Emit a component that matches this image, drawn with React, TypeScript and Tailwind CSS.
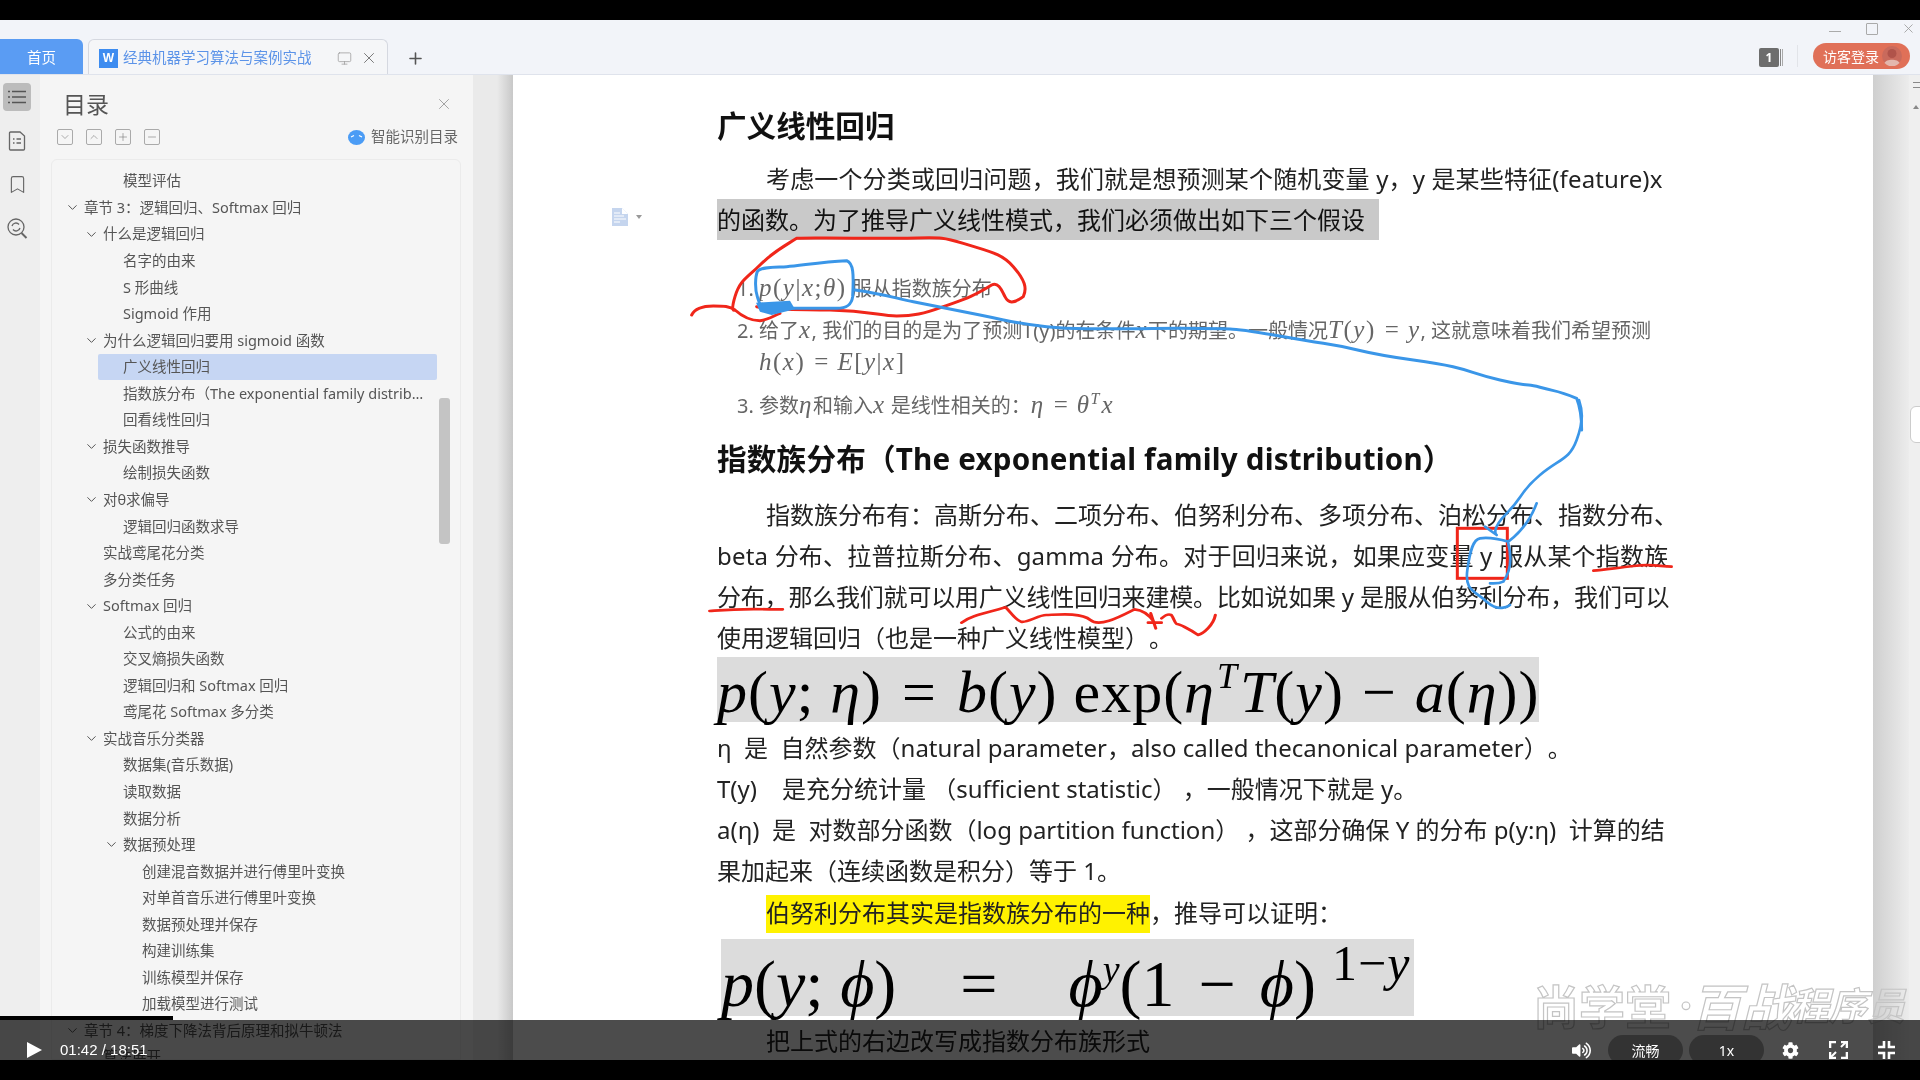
import React from "react";
import { FaVolumeUp, FaCog } from "react-icons/fa";
import { ChevronDown, ChevronUp, Plus, Minus, X, Bookmark, Monitor } from "lucide-react";

type Item = { t: string; x: number; c?: boolean; sel?: boolean };
const toc: Item[] = [
  { t: "模型评估", x: 123 },
  { t: "章节 3：逻辑回归、Softmax 回归", x: 84, c: true },
  { t: "什么是逻辑回归", x: 103, c: true },
  { t: "名字的由来", x: 123 },
  { t: "S 形曲线", x: 123 },
  { t: "Sigmoid 作用", x: 123 },
  { t: "为什么逻辑回归要用 sigmoid 函数", x: 103, c: true },
  { t: "广义线性回归", x: 123, sel: true },
  { t: "指数族分布（The exponential family distrib…", x: 123 },
  { t: "回看线性回归", x: 123 },
  { t: "损失函数推导", x: 103, c: true },
  { t: "绘制损失函数", x: 123 },
  { t: "对θ求偏导", x: 103, c: true },
  { t: "逻辑回归函数求导", x: 123 },
  { t: "实战鸢尾花分类", x: 103 },
  { t: "多分类任务", x: 103 },
  { t: "Softmax 回归", x: 103, c: true },
  { t: "公式的由来", x: 123 },
  { t: "交叉熵损失函数", x: 123 },
  { t: "逻辑回归和 Softmax 回归", x: 123 },
  { t: "鸢尾花 Softmax 多分类", x: 123 },
  { t: "实战音乐分类器", x: 103, c: true },
  { t: "数据集(音乐数据)", x: 123 },
  { t: "读取数据", x: 123 },
  { t: "数据分析", x: 123 },
  { t: "数据预处理", x: 123, c: true },
  { t: "创建混音数据并进行傅里叶变换", x: 142 },
  { t: "对单首音乐进行傅里叶变换", x: 142 },
  { t: "数据预处理并保存", x: 142 },
  { t: "构建训练集", x: 142 },
  { t: "训练模型并保存", x: 142 },
  { t: "加载模型进行测试", x: 142 },
  { t: "章节 4：梯度下降法背后原理和拟牛顿法", x: 84, c: true },
  { t: "算法展开", x: 103 },
];

function M({ children }: { children: React.ReactNode }) {
  return <span className="font-['Liberation_Serif',serif] italic text-[25px] tracking-[1.5px]">{children}</span>;
}
function R({ children }: { children: React.ReactNode }) {
  return <span className="font-['Liberation_Serif',serif] text-[25px] tracking-[1.5px]">{children}</span>;
}
function Eq() {
  return <span className="font-['Liberation_Serif',serif] text-[25px] mx-[9px]">=</span>;
}

function Ann() {
  const red = "#f0261a";
  const blue = "#3a96e8";
  return (
    <svg className="absolute inset-0 pointer-events-none" width="1920" height="1080" viewBox="0 0 1920 1080" fill="none" strokeLinecap="round" strokeLinejoin="round">
      <g transform="translate(680 230) scale(.3333)">
        <path stroke={red} strokeWidth="9" d="M35 255C45 235 70 228 100 228S150 228 165 240C185 258 210 272 240 272C265 270 285 255 300 250M230 230C280 240 330 238 450 240S600 258 650 258S730 252 790 230S870 205 935 165C955 155 965 180 975 200S1000 222 1030 200C1042 175 1035 150 1000 110S930 65 850 40S780 25 600 25S400 22 350 25C310 50 280 65 240 105S180 150 165 200S165 240 165 240" />
        <path stroke={blue} strokeWidth="9" d="M232 125C240 110 280 112 320 110S420 95 500 92C520 100 522 130 518 200C515 225 500 235 470 235S300 235 270 235S240 225 232 200S226 140 232 125" />
        <path fill={blue} d="M228 218L330 212L345 238L275 255L240 245Z" />
        <path stroke={blue} strokeWidth="9" d="M525 180C600 190 650 205 700 215S800 235 900 255S1000 280 1100 290S1300 296 1500 295" />
      </g>
      <g transform="translate(1180 230) scale(.3333)">
        <path stroke={blue} strokeWidth="9" d="M0 295C60 295 100 296 150 297S300 320 430 340S520 365 700 390S850 425 960 450S1030 458 1080 472S1130 480 1190 505C1200 530 1205 560 1205 600" />
      </g>
      <g transform="translate(1380 400) scale(.3333)">
        <rect x="232" y="385" width="150" height="150" stroke={red} strokeWidth="9" strokeLinejoin="miter" />
        <path stroke={blue} strokeWidth="8" d="M597 0C607 30 612 60 590 120S540 175 480 225S430 290 380 340S350 405 350 405L315 380M470 310C455 350 425 395 385 425C350 415 320 412 300 415S270 450 262 510S280 570 320 605S390 615 390 615M385 430C395 470 395 510 370 545C355 552 340 550 330 550" />
        <path stroke={red} strokeWidth="8" d="M640 512C670 510 700 505 760 498S840 500 875 500" />
      </g>
      <g transform="translate(700 550) scale(.3846 .3333)">
        <path stroke={red} strokeWidth="8" d="M25 183C60 180 100 175 180 178H215M680 218C700 200 720 195 795 172C810 190 820 210 835 215S880 195 900 195S990 185 1015 210S1100 195 1130 178C1150 180 1165 190 1180 215M1172 190L1185 235M1165 218H1200M1200 205C1210 195 1220 192 1225 195S1235 222 1240 222S1270 235 1295 255C1310 250 1335 225 1340 195" />
      </g>
    </svg>
  );
}

function Corners({ inward }: { inward?: boolean }) {
  return (
    <svg width="19" height="18" viewBox="0 0 19 18" fill="none" stroke="#fff" strokeWidth="2.6">
      {inward ? (
        <path d="M1 6H7V0M12 0V6H18M1 12H7V18M12 18V12H18" />
      ) : (
        <>
          <path d="M1 7V1H7M12 1H18V7M1 11V17H7M12 17H18V11" />
          <path d="M12 6L17 1M2 16L7 11" strokeWidth="2" />
        </>
      )}
    </svg>
  );
}

export default function App() {
  return (
    <div className="relative w-[1920px] h-[1080px] overflow-hidden bg-black flex flex-col font-['Noto_Sans','Noto_Sans_CJK_SC',sans-serif] [text-spacing-trim:space-all] [filter:blur(0.35px)]">
      <div className="h-5 bg-black shrink-0" />

      {/* Tab bar */}
      <div className="relative h-[55px] shrink-0 bg-[#f2f4f9] border-b border-[#dfe3ec] flex items-end">
        <div className="w-[83px] h-[35px] pt-[2px] bg-[#5a9cf3] rounded-tr-md flex items-center justify-center text-white text-[14.5px]">首页</div>
        <div className="ml-[5px] w-[300px] h-[35px] pt-[2px] bg-[#f5f6f8] border border-b-0 border-[#d5d8e0] rounded-t-md flex items-center pl-[10px]">
          <span className="w-[19px] h-[19px] bg-[#3d8cf0] flex items-center justify-center text-white text-[12px] font-bold font-['Liberation_Sans',sans-serif]">W</span>
          <span className="ml-[5px] w-[200px] text-[14.5px] text-[#5b93e8] whitespace-nowrap">经典机器学习算法与案例实战</span>
          <Monitor size={15} strokeWidth={1.2} className="ml-[14px] text-[#999]" />
          <X size={18} strokeWidth={1.3} className="ml-[8px] text-[#777]" />
        </div>
        <Plus size={19} strokeWidth={2} className="ml-[18px] mb-[6px] text-[#555]" />
        <div className="ml-auto flex items-center mb-[5px] mr-[10px]">
          <div className="flex items-center mt-[3px]">
            <span className="w-[20px] h-[19px] bg-[#6d6d6d] rounded-[2px] text-white text-[12px] font-bold flex items-center justify-center">1</span>
            <span className="ml-[1px] w-[1px] h-[17px] bg-[#888]" />
            <span className="ml-[1px] w-[1px] h-[17px] bg-[#aaa]" />
          </div>
          <span className="ml-[14px] w-[1px] h-[22px] bg-[#e2e4e9]" />
          <div className="ml-[15px] w-[97px] h-[26px] rounded-full bg-[#e07058] flex items-center pl-[10px]">
            <span className="text-white text-[14px] whitespace-nowrap">访客登录</span>
            <svg width="20" height="20" viewBox="0 0 20 20" className="ml-[3px] shrink-0">
              <circle cx="10" cy="10" r="10" fill="#c96a5c" />
              <circle cx="10" cy="7.5" r="4.5" fill="#b0534a" />
              <path d="M2.5 17C4 12.5 16 12.5 17.5 17A10 10 0 0 1 2.5 17Z" fill="#e3b7ad" />
            </svg>
          </div>
        </div>
        <div className="absolute right-0 top-0 flex items-center h-[17px]">
          <span className="w-[12px] h-[1px] bg-[#aaa] mr-[25px] mt-[6px]" />
          <span className="w-[12px] h-[12px] border border-[#aaa] rounded-[1px] mr-[23px]" />
          <X size={15} strokeWidth={1.3} className="mr-[4px] text-[#999]" />
        </div>
      </div>

      {/* Main */}
      <div className="relative flex-1 flex overflow-hidden">
        {/* Rail */}
        <div className="w-10 shrink-0 bg-[#eeeeee] flex flex-col items-center pt-[8px] pr-[6px]">
          <div className="w-[28px] h-[28px] rounded-[4px] bg-[#bcbcbc] flex items-center justify-center">
            <svg width="18" height="14" viewBox="0 0 18 14" stroke="#555" strokeWidth="1.3">
              <path d="M0 1.5H2M4 1.5H18M0 7H2M4 7H18M0 12.5H2M4 12.5H18" />
            </svg>
          </div>
          <svg className="mt-[20px]" width="18" height="20" viewBox="0 0 18 20" fill="none" stroke="#666" strokeWidth="1.3">
            <path d="M2.5 1H12L16.5 5V18A1 1 0 0 1 15.5 19H2.5A1 1 0 0 1 1.5 18V2A1 1 0 0 1 2.5 1Z" />
            <path d="M5 8H6.5M8.5 8H13M5 12H6.5M8.5 12H13" />
          </svg>
          <Bookmark size={21} strokeWidth={1.3} className="mt-[23px] text-[#666]" />
          <svg className="mt-[23px]" width="21" height="21" viewBox="0 0 21 21" fill="none" stroke="#666" strokeWidth="1.3">
            <circle cx="9" cy="9" r="8" />
            <path d="M14.5 15L19.5 20" strokeWidth="2" />
            <path d="M5 8A4 4 0 0 1 12 6.5M13 10A4 4 0 0 1 6 11.5" />
          </svg>
        </div>

        {/* TOC panel */}
        <div className="w-[433px] shrink-0 bg-[#f5f5f5] flex flex-col">
          <div className="relative h-[46px] flex items-end pl-[23px] pb-[2px]">
            <span className="text-[23px] text-[#555] leading-[30px]">目录</span>
            <X size={18} strokeWidth={1} className="absolute right-[20px] top-[20px] text-[#888]" />
          </div>
          <div className="h-[32px] flex items-center pl-[17px] pr-[15px]">
            {[ChevronDown, ChevronUp, Plus, Minus].map((I, i) => (
              <span key={i} className="w-[16px] h-[16px] mr-[13px] border border-[#aaa] rounded-[2px] flex items-center justify-center">
                <I size={12} strokeWidth={1.2} className="text-[#777]" />
              </span>
            ))}
            <span className="ml-auto flex items-center">
              <svg width="17" height="15" viewBox="0 0 17 15">
                <ellipse cx="8.5" cy="7.5" rx="8.5" ry="7.5" fill="#4b9cf5" />
                <path d="M3 7L6 5.5M14 7L11 5.5" stroke="#fff" strokeWidth="1.2" />
              </svg>
              <span className="ml-[6px] text-[14.5px] text-[#666] whitespace-nowrap">智能识别目录</span>
            </span>
          </div>
          <div className="relative flex-1 ml-[11px] mr-[12px] mt-[6px] border border-[#ebebeb] rounded-t-md pt-[8px] overflow-hidden">
            {toc.map((it, i) => (
              <div key={i} className={`relative h-[26.55px] flex items-center text-[14.5px] text-[#555] whitespace-nowrap ${it.sel ? "ml-[46px] mr-[23px] bg-[#c6d6f3] rounded-[2px]" : ""}`} style={{ paddingLeft: it.sel ? 25 : it.x - 52 }}>
                {it.c && <ChevronDown size={15} strokeWidth={1.6} className="mr-[4px] -ml-[19px] text-[#555]" />}
                {it.t}
              </div>
            ))}
            <div className="absolute right-[10px] top-[238px] w-[11px] h-[146px] bg-[#c4c4c4] rounded-[3px]" />
          </div>
        </div>

        {/* Gutter */}
        <div className="w-[40px] shrink-0 bg-[linear-gradient(to_right,#eaeaea_60%,#c8c8c8)]" />

        {/* Page */}
        <div className="relative w-[1360px] shrink-0 bg-white pl-[204px] pt-[31px] text-[24px] text-[#222] whitespace-nowrap">
          <div className="absolute left-[99px] top-[133px] flex items-center">
            <svg width="16" height="18" viewBox="0 0 16 18">
              <path d="M0 0H10L16 6V18H0Z" fill="#c5d5ee" />
              <path d="M10 0V6H16" fill="#fff" />
              <path d="M2 5H8M2 8H12M2 11H14M2 14H8" stroke="#fff" strokeWidth="1" />
            </svg>
            <span className="ml-[8px] w-0 h-0 border-x-[3px] border-x-transparent border-t-[4px] border-t-[#999]" />
          </div>

          <div className="h-[41px] flex items-center text-[29.6px] font-bold text-[#111]">广义线性回归</div>
          <div className="mt-[11px] h-[41px] leading-[41px] pl-[49px] tracking-[0.15px]">考虑一个分类或回归问题，我们就是想预测某个随机变量 y，y 是某些特征(feature)x</div>
          <div className="h-[41px] leading-[41px] w-[662px] bg-[#c9c9c9] text-[#111]">的函数。为了推导广义线性模式，我们必须做出如下三个假设</div>

          <div className="mt-[33px] h-[30px] leading-[30px] pl-[20px] text-[20px] text-[#666]">
            1. <M>p</M><R>(</R><M>y</M><R>|</R><M>x</M><R>;</R><M>θ</M><R>)</R> 服从指数族分布
          </div>
          <div className="mt-[12px] h-[30px] leading-[30px] pl-[20px] text-[20px] text-[#666]">
            2. 给了<M>x</M>, 我们的目的是为了预测T(y)的在条件<M>x</M>下的期望。一般情况<M>T</M><R>(</R><M>y</M><R>)</R><Eq /><M>y</M>, 这就意味着我们希望预测
          </div>
          <div className="mt-[1px] h-[30px] leading-[30px] pl-[42px] text-[#666]">
            <M>h</M><R>(</R><M>x</M><R>)</R><Eq /><M>E</M><R>[</R><M>y</M><R>|</R><M>x</M><R>]</R>
          </div>
          <div className="mt-[8px] h-[30px] leading-[30px] pl-[20px] text-[20px] text-[#666]">
            3. 参数<M>η</M>和输入<M>x</M> 是线性相关的：<M>η</M><Eq /><M>θ</M><span className="font-['Liberation_Serif',serif] italic text-[16px] align-[9px] mr-[2px]">T</span><M>x</M>
          </div>

          <div className="mt-[25px] h-[41px] flex items-center text-[29.6px] font-bold text-[#111] tracking-[0.2px]">指数族分布（The exponential family distribution）</div>
          <div className="mt-[14px] h-[41px] leading-[41px] pl-[49px]">指数族分布有：高斯分布、二项分布、伯努利分布、多项分布、泊松分布、指数分布、</div>
          <div className="h-[41px] leading-[41px] tracking-[0.2px]">beta 分布、拉普拉斯分布、gamma 分布。对于回归来说，如果应变量 y 服从某个指数族</div>
          <div className="h-[41px] leading-[41px] tracking-[-0.2px]">分布，那么我们就可以用广义线性回归来建模。比如说如果 y 是服从伯努利分布，我们可以</div>
          <div className="h-[41px] leading-[41px]">使用逻辑回归（也是一种广义线性模型）。</div>

          <div className="-mt-[1px] h-[65px] w-[822px] bg-[#dcdcdc] flex items-center font-['Liberation_Serif',serif] text-[60px] text-black">
            <span className="leading-none tracking-[1px]"><i>p</i>(<i>y</i>; <i>η</i>)<span className="mx-[20px]">=</span><i>b</i>(<i>y</i>) exp(<i>η</i><i className="text-[36px] align-[24px] mx-[2px]">T</i><i>T</i>(<i>y</i>)<span className="mx-[18px]">−</span><i>a</i>(<i>η</i>))</span>
          </div>

          <div className="mt-[5px] h-[41px] leading-[41px]">η&nbsp;&nbsp;是&nbsp;&nbsp;自然参数（natural parameter，also called thecanonical parameter）。</div>
          <div className="h-[41px] leading-[41px]">T(y)&nbsp;&nbsp;&nbsp;&nbsp;是充分统计量 （sufficient statistic） ，一般情况下就是 y。</div>
          <div className="h-[41px] leading-[41px]">a(η)&nbsp;&nbsp;是&nbsp;&nbsp;对数部分函数（log partition function） ，这部分确保 Y 的分布 p(y:η)&nbsp;&nbsp;计算的结</div>
          <div className="h-[41px] leading-[41px]">果加起来（连续函数是积分）等于 1。</div>

          <div className="mt-[1px] h-[41px] flex items-end pl-[49px]">
            <span className="bg-[#fff200] h-[38px] leading-[36px] w-[384px]">伯努利分布其实是指数族分布的一种</span>
            <span className="h-[38px] leading-[36px]">，推导可以证明：</span>
          </div>

          <div className="mt-[6px] ml-[4px] h-[77px] w-[693px] bg-[#dcdcdc] flex items-center font-['Liberation_Serif',serif] text-[66px] text-black">
            <span className="leading-none"><i>p</i>(<i>y</i>; <i>ϕ</i>)<span className="ml-[64px] mr-[71px]">=</span><i>ϕ</i><i className="text-[38px] align-[24px]">y</i>(1<span className="mx-[24px]">−</span><i>ϕ</i>)<span className="text-[50px] align-[26px] ml-[16px] tracking-[1px]">1−<i>y</i></span></span>
          </div>
          <div className="mt-[4px] h-[41px] leading-[41px] pl-[49px]">把上式的右边改写成指数分布族形式</div>
        </div>

        {/* Right gutter */}
        <div className="relative flex-1 flex">
          <div className="w-[36px] bg-[linear-gradient(to_right,#cfcfcf,#ececec)]" />
          <div className="relative flex-1 bg-[#efefef]">
            <span className="absolute left-[4px] top-[7px] w-[7px] h-[6px] border-y border-[#888]" />
            <span className="absolute left-[4px] top-[30px] w-0 h-0 border-x-[3px] border-x-transparent border-b-[4px] border-b-[#888]" />
            <span className="absolute left-[1px] top-[331px] w-[12px] h-[37px] bg-white border border-[#ccc] rounded-l-md" />
          </div>
        </div>

        {/* watermark */}
        <div className="absolute left-[1533px] top-[904px] flex items-center h-[50px] font-bold whitespace-nowrap text-transparent [-webkit-text-stroke:1.2px_#c4c4c4] font-['Noto_Sans_CJK_SC',sans-serif]">
          <span className="text-[46px] leading-none">尚学堂</span>
          <span className="text-[30px] leading-none w-[20px] text-center">·</span>
          <span className="text-[50px] leading-none italic">百战</span>
          <span className="text-[38px] leading-none italic">程序员</span>
        </div>

        {/* Player overlay */}
        <div className="absolute left-0 bottom-[40px] w-[173px] h-[4px] bg-black" />
        <div className="absolute left-0 right-0 bottom-0 h-[40px] pt-[20px] bg-black/70 flex items-center overflow-hidden text-white">
          <svg className="ml-[27px]" width="15" height="16" viewBox="0 0 15 16"><path d="M0 0L15 8L0 16Z" fill="#fff" /></svg>
          <span className="ml-[18px] text-[15px] font-['Liberation_Sans',sans-serif]">01:42 / 18:51</span>
          <span className="ml-auto"><FaVolumeUp size={19} /></span>
          <span className="ml-[17px] w-[75px] h-[30px] rounded-full bg-[#333] flex items-center justify-center text-[14px]">流畅</span>
          <span className="ml-[6px] w-[75px] h-[30px] rounded-full bg-[#333] flex items-center justify-center text-[14px]">1x</span>
          <span className="ml-[18px]"><FaCog size={17} /></span>
          <span className="ml-[30px]"><Corners /></span>
          <span className="ml-[29px] mr-[24px]"><Corners inward /></span>
        </div>
      </div>

      <div className="h-5 bg-black shrink-0" />
      <Ann />
    </div>
  );
}
